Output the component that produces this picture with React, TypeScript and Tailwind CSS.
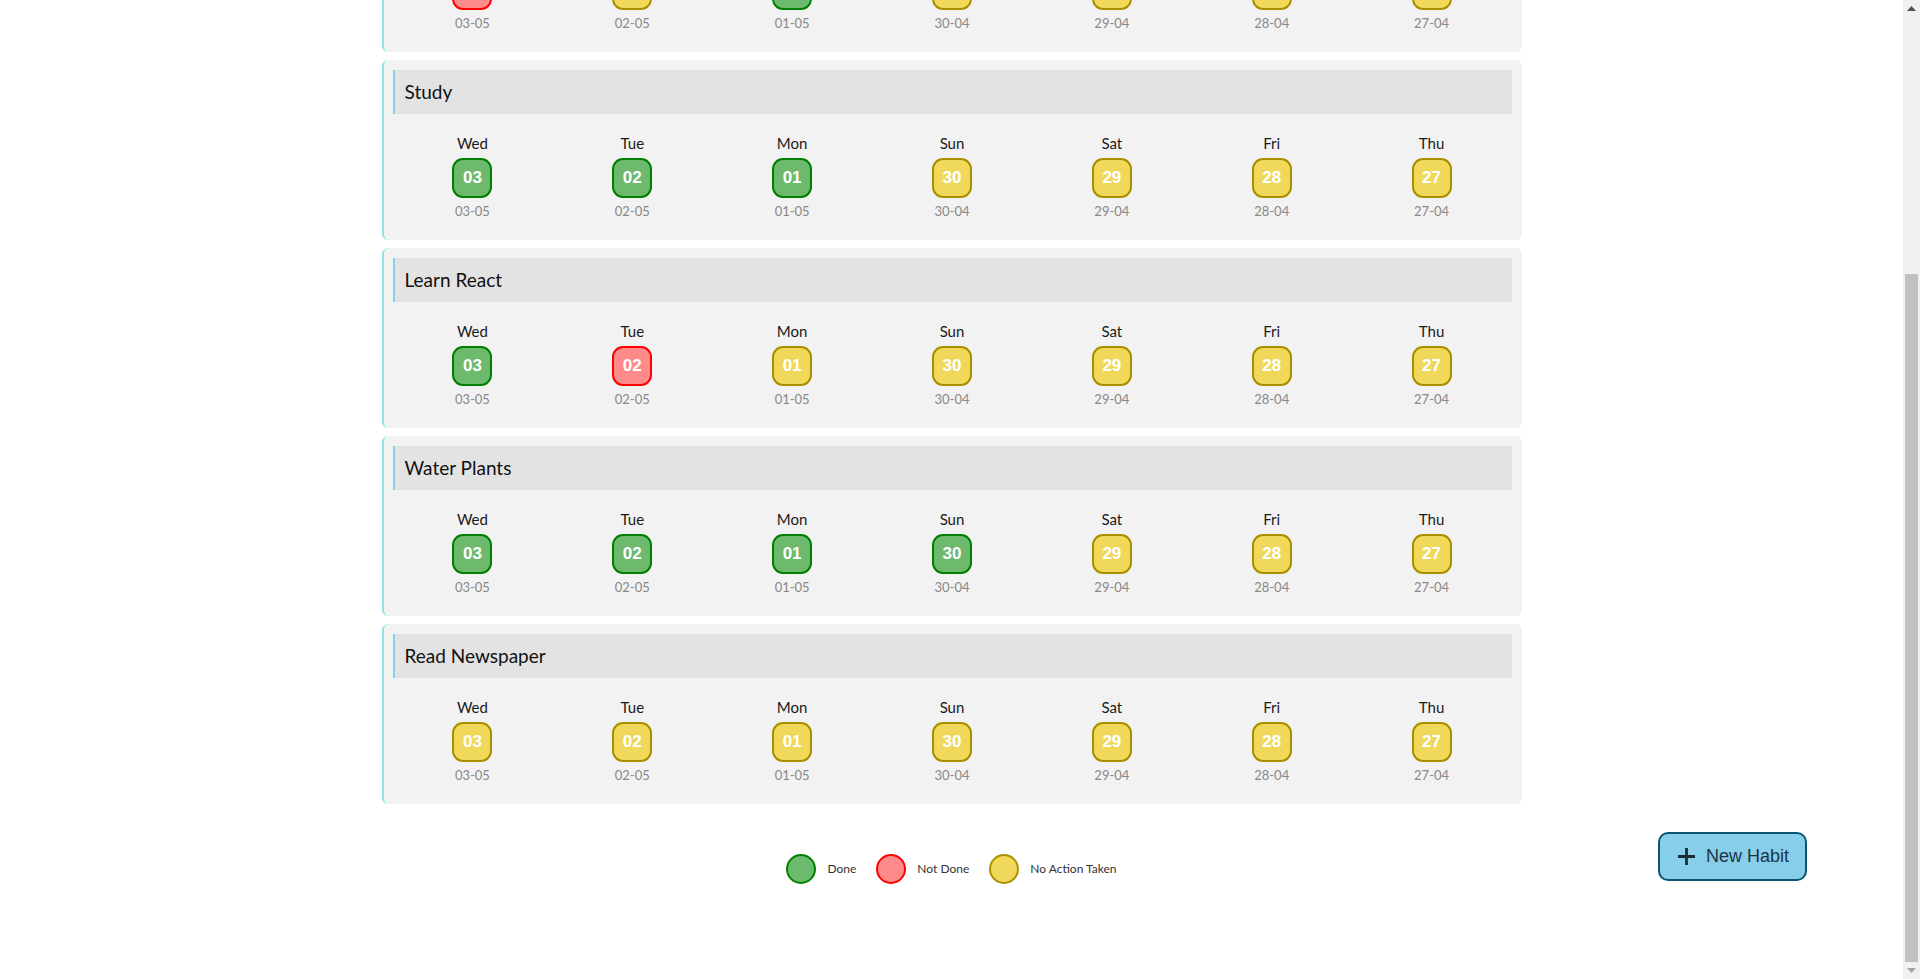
import { useLayoutEffect, useRef } from "react";

type Status = "done" | "missed" | "none";

const days = [
  { name: "Wed", day: "03", date: "03-05" },
  { name: "Tue", day: "02", date: "02-05" },
  { name: "Mon", day: "01", date: "01-05" },
  { name: "Sun", day: "30", date: "30-04" },
  { name: "Sat", day: "29", date: "29-04" },
  { name: "Fri", day: "28", date: "28-04" },
  { name: "Thu", day: "27", date: "27-04" },
];

const d: Status = "done";
const m: Status = "missed";
const n: Status = "none";

const habits: { title: string; log: Status[] }[] = [
  { title: "Morning Walk", log: [d, d, m, n, n, n, n] },
  { title: "Meditate", log: [m, n, d, n, n, n, n] },
  { title: "Study", log: [d, d, d, n, n, n, n] },
  { title: "Learn React", log: [d, m, n, n, n, n, n] },
  { title: "Water Plants", log: [d, d, d, d, n, n, n] },
  { title: "Read Newspaper", log: [n, n, n, n, n, n, n] },
];

const statusClass: Record<Status, string> = {
  done: "bg-[#6db96d] border-[#008000]",
  missed: "bg-[#ff8a8a] border-[#ff0000]",
  none: "bg-[#f0d95a] border-[#a98f00]",
};

const HabitCard = ({ title, log }: { title: string; log: Status[] }) => {
  return (
    <div className="h-[180px] rounded-md border-l-2 border-[#93e1ec] bg-[#f2f2f2] pl-[9px] pr-[10px] pt-[10px]">
      <div className="flex h-[44px] items-center border-l-2 border-[#87ceeb] bg-[#e3e3e3] pl-[10px] text-[19px] text-[#111]">
        {title}
      </div>
      <div className="mt-[19px] grid grid-cols-7">
        {days.map((day, i) => (
          <div key={day.date} className="flex flex-col items-center">
            <div className="h-5 text-[15px] leading-5 text-[#1a1a1a]">{day.name}</div>
            <div
              className={`mt-[5px] flex size-10 items-center justify-center rounded-[11px] border-2 font-['Liberation_Sans',Arial,sans-serif] text-[17px] font-bold text-white ${statusClass[log[i]]}`}
            >
              {day.day}
            </div>
            <div className="mt-1 h-[18px] text-[13px] leading-[18px] text-[#888]">{day.date}</div>
          </div>
        ))}
      </div>
    </div>
  );
};

const LegendItem = ({ status, label }: { status: Status; label: string }) => (
  <div className="flex items-center gap-[11px]">
    <div className={`size-[30px] rounded-full border-2 ${statusClass[status]}`} />
    <span className="text-[12px] text-[#333]">{label}</span>
  </div>
);

// page scrollbar, scrolled to the bottom
const Scrollbar = () => (
  <div className="flex h-screen w-[17px] shrink-0 flex-col bg-[#f1f1f1]">
    <div className="flex h-[17px] items-center justify-center">
      <svg width="9" height="5" viewBox="0 0 9 5">
        <polygon points="4.5,0 9,5 0,5" fill="#505050" />
      </svg>
    </div>
    <div className="flex flex-1 flex-col px-[2px]">
      <div className="h-[257px]" />
      <div className="flex-1 bg-[#c1c1c1]" />
    </div>
    <div className="flex h-[17px] items-center justify-center">
      <svg width="9" height="5" viewBox="0 0 9 5">
        <polygon points="0,0 9,0 4.5,5" fill="#a3a3a3" />
      </svg>
    </div>
  </div>
);

export default function App() {
  const scrollRef = useRef<HTMLDivElement>(null);

  useLayoutEffect(() => {
    if (scrollRef.current) {
      scrollRef.current.scrollTop = scrollRef.current.scrollHeight;
    }
  }, []);

  return (
    <div className="flex h-screen overflow-hidden bg-white font-['Lato','Noto_Sans',sans-serif]">
      <div ref={scrollRef} className="h-screen flex-1 overflow-hidden">
        <div className="mx-auto w-[1140px] pt-[50px] pb-[95px]">
          <div className="flex flex-col gap-2">
            {habits.map((h) => (
              <HabitCard key={h.title} title={h.title} log={h.log} />
            ))}
          </div>
          <div className="mt-[50px] flex h-[30px] items-center justify-center gap-5">
            <LegendItem status="done" label="Done" />
            <LegendItem status="missed" label="Not Done" />
            <LegendItem status="none" label="No Action Taken" />
          </div>
        </div>
      </div>
      <Scrollbar />
      <button className="fixed bottom-[98px] right-[113px] flex h-[49px] w-[149px] items-center gap-[11px] rounded-[10px] border-2 border-[#0b5474] bg-[#87ceeb] pl-[18px] font-['Liberation_Sans',Arial,sans-serif] text-[18px] text-[#1d3445]">
        <svg width="17" height="17" viewBox="0 0 17 17" className="shrink-0">
          <path d="M0 8.5h17M8.5 0v17" stroke="#1d2b35" strokeWidth="2.8" />
        </svg>
        New Habit
      </button>
    </div>
  );
}
